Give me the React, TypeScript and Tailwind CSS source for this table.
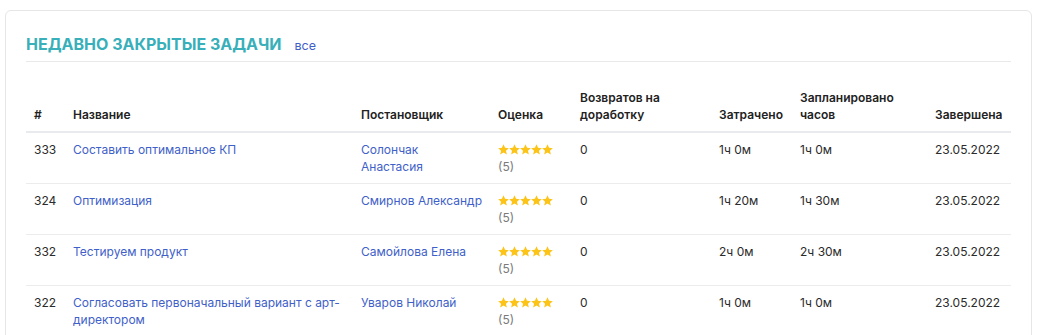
import React from "react";

type Task = {
  id: number;
  title: string;
  author: string;
  returns: number;
  spent: string;
  planned: string;
  done: string;
};

const tasks: Task[] = [
  { id: 333, title: "Составить оптимальное КП", author: "Солончак Анастасия", returns: 0, spent: "1ч 0м", planned: "1ч 0м", done: "23.05.2022" },
  { id: 324, title: "Оптимизация", author: "Смирнов Александр", returns: 0, spent: "1ч 20м", planned: "1ч 30м", done: "23.05.2022" },
  { id: 332, title: "Тестируем продукт", author: "Самойлова Елена", returns: 0, spent: "2ч 0м", planned: "2ч 30м", done: "23.05.2022" },
  { id: 322, title: "Согласовать первоначальный вариант с арт-директором", author: "Уваров Николай", returns: 0, spent: "1ч 0м", planned: "1ч 0м", done: "23.05.2022" },
];

function Star() {
  return (
    <svg viewBox="1 1.5 22 21" className="h-[11px] w-[11px]" fill="#fcc419">
      <path d="M12 1.5l3.1 7.1 7.6.7-5.8 5.1 1.8 7.6L12 18l-6.7 4 1.8-7.6-5.8-5.1 7.6-.7z" />
    </svg>
  );
}

function Rating({ value }: { value: number }) {
  return (
    <div>
      <div className="flex h-[17px] items-center">
        {Array.from({ length: 5 }).map((_, i) => (
          <Star key={i} />
        ))}
      </div>
      <div className="text-[#7a7a7a]">({value})</div>
    </div>
  );
}

export default function App() {
  return (
    <div className="bg-white pt-[10px] pl-[5px]" style={{ fontFamily: "Inter, 'Noto Sans', sans-serif" }}>
      <div className="w-[1027px] rounded-md border border-[#e6e6e6] px-5 pt-[21px] pb-4">
        {/* Header */}
        <div className="flex items-baseline gap-[13px] border-b border-[#e9e9e9] pb-[5px]">
          <h2 className="text-[16px] leading-6 font-bold uppercase text-[#38afb9]">Недавно закрытые задачи</h2>
          <a className="text-[12.5px] text-[#3f5fc9]">все</a>
        </div>

        <table className="mt-[19px] w-full table-fixed border-collapse text-[12px] leading-[17px] text-[#2b2b2b]">
          <colgroup>
            <col className="w-[39px]" />
            <col className="w-[288px]" />
            <col className="w-[137px]" />
            <col className="w-[82px]" />
            <col className="w-[139px]" />
            <col className="w-[81px]" />
            <col className="w-[135px]" />
            <col />
          </colgroup>
          <thead>
            <tr className="border-b-2 border-[#e8eaed] text-left align-bottom text-[#222]">
              <th className="px-2 py-2 font-semibold">#</th>
              <th className="px-2 py-2 font-semibold">Название</th>
              <th className="px-2 py-2 font-semibold">Постановщик</th>
              <th className="px-2 py-2 font-semibold">Оценка</th>
              <th className="px-2 py-2 font-semibold">Возвратов на доработку</th>
              <th className="px-2 py-2 font-semibold">Затрачено</th>
              <th className="px-2 py-2 font-semibold">Запланировано часов</th>
              <th className="px-2 py-2 font-semibold">Завершена</th>
            </tr>
          </thead>
          <tbody>
            {tasks.map((t) => (
              <tr key={t.id} className="border-b border-[#ececec] align-top">
                <td className="px-2 py-2">{t.id}</td>
                <td className="px-2 py-2">
                  <a className="text-[#3f5fc9]">{t.title}</a>
                </td>
                <td className="px-2 py-2">
                  <a className="text-[#3f5fc9]">{t.author}</a>
                </td>
                <td className="px-2 py-2">
                  <Rating value={5} />
                </td>
                <td className="px-2 py-2">{t.returns}</td>
                <td className="px-2 py-2">{t.spent}</td>
                <td className="px-2 py-2">{t.planned}</td>
                <td className="px-2 py-2">{t.done}</td>
              </tr>
            ))}
          </tbody>
        </table>
      </div>
    </div>
  );
}
